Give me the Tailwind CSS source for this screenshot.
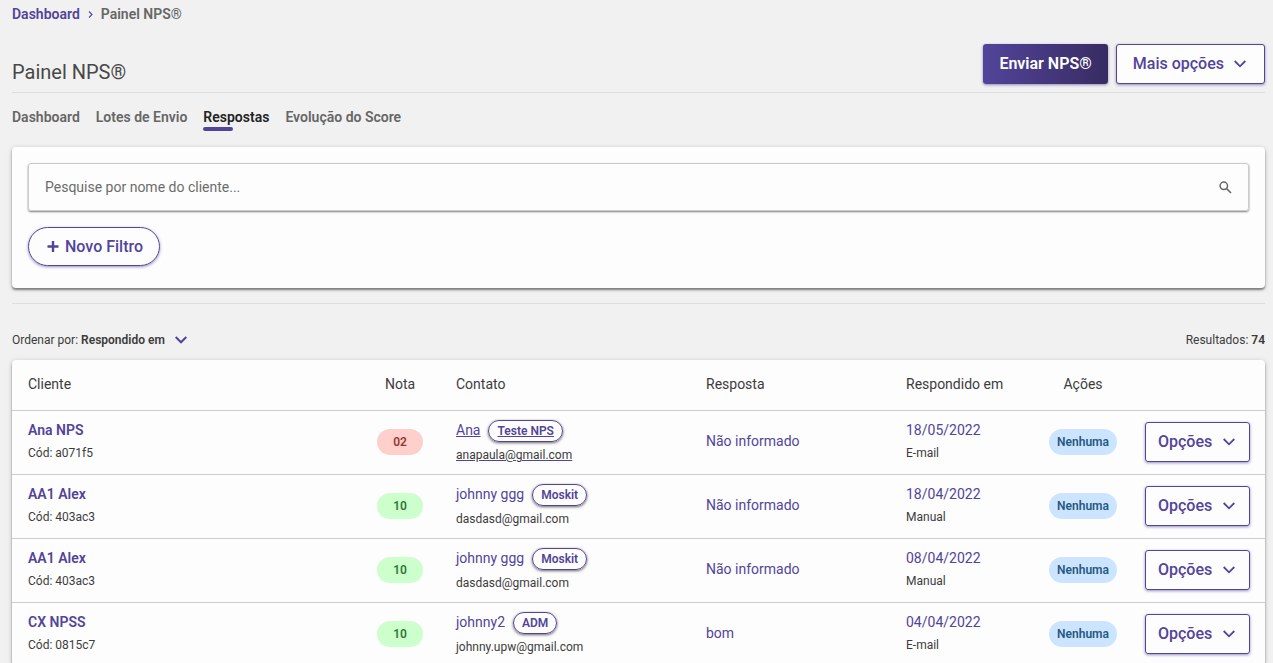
<!DOCTYPE html>
<html lang="pt-BR">
<head>
  <meta charset="UTF-8" />
  <title>Painel NPS®</title>
  <meta name="viewport" content="width=device-width, initial-scale=1.0">
  <script src="https://cdn.jsdelivr.net/npm/@tailwindcss/browser@4"></script>
</head>
<body class="bg-[#f1f1f1] text-[#3c3c3c] font-[Roboto,sans-serif] text-sm">
  <div class="pl-3 pr-2">
    <nav class="flex items-center h-7 font-semibold" aria-label="Breadcrumb">
      <a href="#" class="text-[#52449a]">Dashboard</a>
      <svg class="mx-2 w-[5px] h-[7px]" viewBox="0 0 5 7" fill="none" stroke="#52449a" stroke-width="1.1"><path d="M1 .5l3 3-3 3" /></svg>
      <span class="text-[#666]">Painel NPS®</span>
    </nav>

    <header class="flex items-end justify-between h-[65px] pb-2 border-b border-[#dedede]">
      <h1 class="text-xl leading-6 text-[#484848]">Painel NPS®</h1>
      <div class="flex gap-2 text-base font-medium">
        <button class="h-10 px-4 rounded-[3px] bg-linear-to-r from-[#52449a] to-[#382c63] text-white font-semibold shadow-[0_1px_3px_#52449a99]">Enviar NPS®</button>
        <button class="h-10 pl-4 pr-[18px] flex items-center gap-[10px] rounded-[3px] border border-[#52449a] bg-[#fdfdfd] text-[#52449a] shadow-[0_1px_3px_#52449a99]">
          Mais opções
          <svg class="w-3 h-2" viewBox="0 0 12 8" fill="none" stroke="currentColor" stroke-width="1.8"><path d="M.7 1l5.3 5.3L11.3 1" /></svg>
        </button>
      </div>
    </header>

    <nav class="flex gap-4 h-[54px] pt-[14px] font-semibold text-[#666]">
      <a href="#">Dashboard</a>
      <a href="#">Lotes de Envio</a>
      <a href="#" class="text-[#222]" aria-current="page">
        Respostas
        <span class="block w-[30px] h-1 rounded-sm bg-[#52449a]"></span>
      </a>
      <a href="#">Evolução do Score</a>
    </nav>

    <section class="h-[141px] p-4 rounded bg-[#fdfdfd] shadow-[0_2px_2px_#00000066,0_1px_5px_#00000033]">
      <label class="flex items-center h-12 px-4 rounded-[3px] border border-[#ccc] shadow-[0_1px_2px_#00000080]">
        <input type="text" aria-label="Pesquisar cliente" placeholder="Pesquise por nome do cliente..." class="flex-1 outline-none placeholder:text-[#6c6c6c]" />
        <svg class="w-[13px] h-[13px]" viewBox="0 0 13 13" fill="none" stroke="#666" stroke-width="1.5"><circle cx="4.8" cy="4.8" r="3.7" /><path d="M7.6 7.6l4.4 4.4" /></svg>
      </label>
      <button class="mt-4 h-[39px] px-4 flex items-center gap-[6px] rounded-full border border-[#52449a] text-[#52449a] text-base font-medium shadow-[0_1px_3px_#52449a99]">
        <svg class="ml-[2px] w-3 h-3" viewBox="0 0 12 12" stroke="currentColor" stroke-width="2.4"><path d="M6 0v11M.5 5.5h11" /></svg>
        Novo Filtro
      </button>
    </section>

    <div class="mt-[15px] border-t border-[#dedede] pt-6 pb-2 flex items-center justify-between text-xs h-[57px]">
      <button class="flex items-center">
        <span>Ordenar por: <b class="font-semibold">Respondido em</b></span>
        <svg class="ml-[10px] w-3 h-2" viewBox="0 0 12 8" fill="none" stroke="#52449a" stroke-width="2"><path d="M.7 1l5.3 5.3L11.3 1" /></svg>
      </button>
      <span>Resultados: <b class="font-semibold">74</b></span>
    </div>

    <div class="rounded bg-[#fdfdfd] shadow-[0_2px_2px_#00000066,0_1px_5px_#00000033]">
      <table class="w-full table-fixed text-left">
        <thead>
          <tr class="h-[50px]">
            <th class="pl-4 pb-[2px] font-normal">Cliente</th>
            <th class="w-20 pb-[2px] font-normal text-center">Nota</th>
            <th class="w-[250px] pl-4 pb-[2px] font-normal">Contato</th>
            <th class="w-[200px] pl-4 pb-[2px] font-normal">Resposta</th>
            <th class="w-[147px] pl-4 pb-[2px] font-normal">Respondido em</th>
            <th class="w-[92px] pb-[2px] font-normal text-center">Ações</th>
            <th class="w-[136px]"></th>
          </tr>
        </thead>
        <tbody id="respostas"></tbody>
      </table>
    </div>
  </div>

  <script>
    const respostas = [
      { cliente: 'Ana NPS', cod: 'a071f5', nota: '02', contato: 'Ana', tag: 'Teste NPS', email: 'anapaula@gmail.com', resposta: 'Não informado', data: '18/05/2022', via: 'E-mail', ativo: true },
      { cliente: 'AA1 Alex', cod: '403ac3', nota: '10', contato: 'johnny ggg', tag: 'Moskit', email: 'dasdasd@gmail.com', resposta: 'Não informado', data: '18/04/2022', via: 'Manual' },
      { cliente: 'AA1 Alex', cod: '403ac3', nota: '10', contato: 'johnny ggg', tag: 'Moskit', email: 'dasdasd@gmail.com', resposta: 'Não informado', data: '08/04/2022', via: 'Manual' },
      { cliente: 'CX NPSS', cod: '0815c7', nota: '10', contato: 'johnny2', tag: 'ADM', email: 'johnny.upw@gmail.com', resposta: 'bom', data: '04/04/2022', via: 'E-mail' },
    ];

    document.getElementById('respostas').innerHTML = respostas.map(r => `
      <tr class="h-16 border-t border-[#ccc]">
        <td class="pl-4">
          <a href="#" class="block leading-5 font-semibold text-[#52449a]">${r.cliente}</a>
          <div class="mt-[5px] text-xs leading-4 pb-[3px]">Cód: ${r.cod}</div>
        </td>
        <td class="text-center">
          <span class="inline-flex items-center justify-center w-[46px] h-[26px] rounded-full text-xs font-semibold ${Number(r.nota) < 7 ? 'bg-[#ffcfcc] text-[#983832]' : 'bg-[#ccffcc] text-[#2b7a34]'}">${r.nota}</span>
        </td>
        <td class="pl-4">
          <a href="#" class="block text-[#52449a] ${r.ativo ? 'underline' : ''}">
            <span class="flex items-start gap-2">
              <span>${r.contato}</span>
              <span class="h-[22px] px-2 leading-5 rounded-full border border-[#52449a] text-xs font-semibold shadow-[0_1px_3px_#00000099]">${r.tag}</span>
            </span>
            <span class="block mt-[5px] pb-px text-xs leading-4 text-[#3c3c3c]">${r.email}</span>
          </a>
        </td>
        <td class="pl-4 pb-[2px] text-[#52449a]">${r.resposta}</td>
        <td class="pl-4">
          <div class="leading-5 text-[#52449a]">${r.data}</div>
          <div class="mt-[5px] text-xs leading-4 pb-[3px]">${r.via}</div>
        </td>
        <td class="text-center">
          <span class="inline-flex items-center h-[26px] px-2 rounded-full bg-[#cce5ff] text-[#285783] text-xs font-semibold">Nenhuma</span>
        </td>
        <td class="pl-4 pr-[15px]">
          <button class="w-full h-10 px-3 flex items-center gap-[11px] rounded-[3px] border border-[#52449a] text-[#52449a] text-base font-medium shadow-[0_1px_3px_#52449a99]">
            Opções
            <svg class="w-3 h-2" viewBox="0 0 12 8" fill="none" stroke="currentColor" stroke-width="1.8"><path d="M.7 1l5.3 5.3L11.3 1" /></svg>
          </button>
        </td>
      </tr>
    `).join('');
  </script>
</body>
</html>
